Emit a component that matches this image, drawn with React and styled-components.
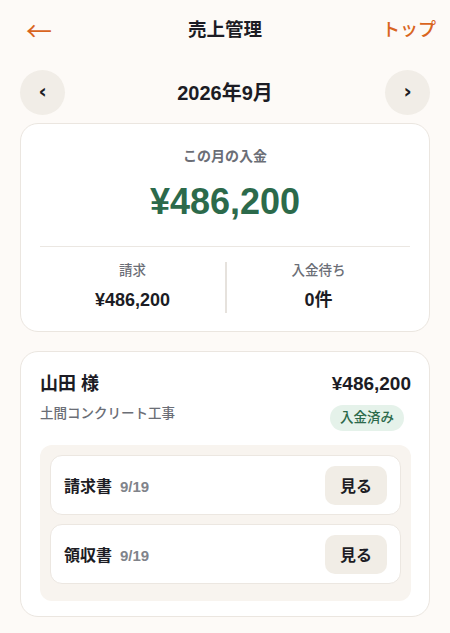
import React from 'react';
import styled, { createGlobalStyle } from 'styled-components';

const GlobalStyle = createGlobalStyle`
  html, body {
    margin: 0;
    padding: 0;
    background: #fdfaf7;
  }
  body {
    font-family: "Liberation Sans", "Noto Sans CJK JP", sans-serif;
    color: #1c1c24;
  }
  * {
    box-sizing: border-box;
  }
`;

const docs = [
  { label: '請求書', date: '9/19' },
  { label: '領収書', date: '9/19' },
];

const App = () => {
  return (
    <Page>
      <GlobalStyle />
      <Header>
        <BackLink>←</BackLink>
        <Title>売上管理</Title>
        <TopLink>トップ</TopLink>
      </Header>

      <MonthNav>
        <RoundButton>‹</RoundButton>
        <MonthLabel>2026年9月</MonthLabel>
        <RoundButton>›</RoundButton>
      </MonthNav>

      <SummaryCard>
        <SummaryLabel>この月の入金</SummaryLabel>
        <BigAmount>¥486,200</BigAmount>
        <StatsRow>
          <Stat>
            <StatLabel>請求</StatLabel>
            <StatValue>¥486,200</StatValue>
          </Stat>
          <Stat>
            <StatLabel>入金待ち</StatLabel>
            <StatValue>0件</StatValue>
          </Stat>
        </StatsRow>
      </SummaryCard>

      <ClientCard>
        <ClientHead>
          <div>
            <ClientName>山田 様</ClientName>
            <ClientJob>土間コンクリート工事</ClientJob>
          </div>
          <ClientRight>
            <ClientAmount>¥486,200</ClientAmount>
            <Badge>入金済み</Badge>
          </ClientRight>
        </ClientHead>

        <DocList>
          {docs.map((d) => (
            <DocRow key={d.label}>
              <DocName>
                {d.label}
                <DocDate>{d.date}</DocDate>
              </DocName>
              <ViewButton>見る</ViewButton>
            </DocRow>
          ))}
        </DocList>
      </ClientCard>
    </Page>
  );
};

const Page = styled.div`
  width: 450px;
  min-height: 633px;
  padding: 0 20px 16px;
`;

const Header = styled.div`
  display: grid;
  grid-template-columns: 1fr auto 1fr;
  align-items: center;
  height: 60px;
`;

const BackLink = styled.span`
  justify-self: start;
  margin-left: 6px;
  color: #d9651f;
  font-family: "Noto Sans CJK JP", sans-serif;
  font-size: 26px;
  font-weight: 400;
  line-height: 1;
`;

const Title = styled.h1`
  margin: 0;
  font-size: 18.5px;
  font-weight: 700;
  line-height: 24px;
  color: #1c1c24;
`;

const TopLink = styled.span`
  justify-self: end;
  margin-right: -6px;
  color: #d9651f;
  font-size: 18px;
  font-weight: 500;
  line-height: 24px;
`;

const MonthNav = styled.div`
  display: flex;
  align-items: center;
  justify-content: space-between;
  margin-top: 10px;
  height: 45px;
`;

const RoundButton = styled.button`
  width: 45px;
  height: 45px;
  padding: 0 0 3px;
  border: none;
  border-radius: 50%;
  background: #f1ede7;
  color: #1c1c24;
  font-family: "DejaVu Sans", sans-serif;
  font-size: 20px;
  font-weight: 700;
  cursor: pointer;
`;

const MonthLabel = styled.div`
  font-size: 20px;
  font-weight: 700;
  line-height: 28px;
`;

const Card = styled.div`
  background: #ffffff;
  border: 1px solid #ebe6e0;
  border-radius: 18px;
`;

const SummaryCard = styled(Card)`
  margin-top: 8px;
  padding: 22px 19px 18px;
  text-align: center;
`;

const SummaryLabel = styled.div`
  font-size: 14px;
  font-weight: 700;
  line-height: 20px;
  color: #6b6e76;
`;

const BigAmount = styled.div`
  margin-top: 14px;
  padding-bottom: 22px;
  border-bottom: 1px solid #ebe7e2;
  font-size: 36px;
  font-weight: 700;
  line-height: 44px;
  color: #2c6a4b;
`;

const StatsRow = styled.div`
  display: grid;
  grid-template-columns: 1fr 1fr;
  margin-top: 15px;
`;

const Stat = styled.div`
  display: flex;
  flex-direction: column;
  gap: 9px;
  padding-bottom: 2px;

  & + & {
    border-left: 2px solid #e6e2dd;
  }
`;

const StatLabel = styled.div`
  font-size: 13.5px;
  font-weight: 500;
  line-height: 18px;
  color: #6b6e76;
`;

const StatValue = styled.div`
  font-size: 18px;
  font-weight: 700;
  line-height: 22px;
  color: #1c1c24;
`;

const ClientCard = styled(Card)`
  margin-top: 19px;
  padding: 20px 18px 15px 19px;
`;

const ClientHead = styled.div`
  display: flex;
  justify-content: space-between;
  align-items: flex-start;
`;

const ClientName = styled.div`
  font-size: 18px;
  font-weight: 700;
  line-height: 24px;
`;

const ClientJob = styled.div`
  margin-top: 8px;
  font-size: 13.5px;
  font-weight: 500;
  line-height: 20px;
  color: #6b6e76;
`;

const ClientRight = styled.div`
  display: flex;
  flex-direction: column;
  align-items: flex-end;
  gap: 9px;
`;

const ClientAmount = styled.div`
  font-size: 19px;
  font-weight: 700;
  line-height: 24px;
`;

const Badge = styled.span`
  height: 26px;
  margin-right: 7px;
  padding: 3px 10px;
  border-radius: 999px;
  background: #e5f2ea;
  color: #2c6a4b;
  font-size: 13.5px;
  font-weight: 500;
  line-height: 20px;
`;

const DocList = styled.div`
  display: flex;
  flex-direction: column;
  gap: 9px;
  margin-top: 14px;
  padding: 10px 10px 17px;
  background: #f8f4ef;
  border-radius: 12px;
`;

const DocRow = styled.div`
  display: flex;
  align-items: center;
  justify-content: space-between;
  height: 60px;
  padding: 0 13px;
  background: #ffffff;
  border: 1px solid #ece7e1;
  border-radius: 12px;
`;

const DocName = styled.div`
  display: flex;
  align-items: baseline;
  gap: 8px;
  font-size: 16px;
  font-weight: 700;
  color: #1c1c24;
`;

const DocDate = styled.span`
  font-size: 15px;
  font-weight: 700;
  color: #80838a;
`;

const ViewButton = styled.button`
  width: 62px;
  height: 39px;
  border: none;
  border-radius: 10px;
  background: #f1ede6;
  color: #1c1c24;
  font-family: inherit;
  font-size: 16px;
  font-weight: 700;
  cursor: pointer;
`;

export default App;
